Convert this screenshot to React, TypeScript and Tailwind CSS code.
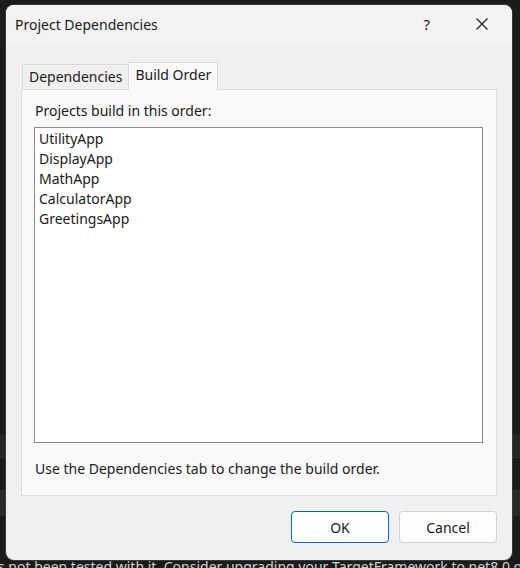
import React from "react";

const font = { fontFamily: '"Segoe UI", "Noto Sans", "Open Sans", sans-serif' };

export default function App() {
  const items = ["UtilityApp", "DisplayApp", "MathApp", "CalculatorApp", "GreetingsApp"];
  return (
    <div className="relative w-[520px] h-[568px] overflow-hidden bg-[#1b1b1b]" style={font}>
      {/* background IDE content */}
      <div className="absolute inset-0 flex flex-col">
        <div className="h-[416px] shrink-0" />
        <div className="h-[19px] shrink-0 bg-[#1b1b1b]" />
        <div className="h-[22px] shrink-0 bg-[#262626]" />
        <div className="h-[10px] shrink-0 bg-[#1b1b1b] border-t border-[#2e2e2e]" />
        <div className="h-[26px] shrink-0 mt-[23px] bg-[#2a2a2a] text-[#c8c8c8] text-[15px] leading-[26px] -ml-[8px]">
          S
        </div>
        <div className="mt-[42px] shrink-0 text-[#cfcfcf] text-[14px] leading-[18px] whitespace-nowrap -ml-[2px]">
          s not been tested with it. Consider upgrading your TargetFramework to net8.0 o
        </div>
      </div>

      {/* dialog window */}
      <div className="absolute left-[6px] top-[5px] w-[506px] h-[555px] rounded-[8px] bg-[#f0f0f0] overflow-hidden flex flex-col shadow-[0_0_0_1px_#3a3a3a]">
        <div className="h-[38px] bg-[#f3f3f3] flex items-center pl-[9px] pr-[24px] text-[14px] text-[#1a1a1a]">
          <span>Project Dependencies</span>
          <span className="ml-auto mr-[46px] text-[15px]">?</span>
          <svg width="12" height="12" viewBox="0 0 12 12">
            <path d="M0.5 0.5 L11.5 11.5 M11.5 0.5 L0.5 11.5" stroke="#1a1a1a" strokeWidth="1.1" />
          </svg>
        </div>

        <div className="flex flex-col px-[15px] pt-[18px]">
          <div className="flex items-end h-[28px] pl-[1px] text-[14px] text-[#1a1a1a]">
            <div className="h-[25px] px-[6px] border border-b-0 border-[#dadada] bg-[#f0f0f0] leading-[23px] -mr-[1px]">
              Dependencies
            </div>
            <div className="h-[28px] px-[6px] border border-b-0 border-[#dadada] bg-[#f9f9f9] leading-[24px] relative top-[1px] z-10">
              Build Order
            </div>
          </div>
          <div className="h-[407px] border border-[#dcdcdc] bg-[#f9f9f9] flex flex-col pl-[12px] pr-[13px] text-[14px] text-[#1a1a1a]">
            <div className="h-[37px] pt-[11px] pl-[1px] leading-[20px]">Projects build in this order:</div>
            <div className="h-[316px] border border-[#828790] bg-white pt-[1px] pl-[4px]">
              {items.map((it) => (
                <div key={it} className="leading-[20px] h-[20px]">
                  {it}
                </div>
              ))}
            </div>
            <div className="pl-[1px] pt-[16px] leading-[20px]">Use the Dependencies tab to change the build order.</div>
          </div>
        </div>

        <div className="flex justify-end gap-[10px] pt-[15px] pr-[15px] text-[14px] text-[#1a1a1a]">
          <button className="w-[98px] h-[32px] rounded-[4px] border border-[#0067c0] bg-white">OK</button>
          <button className="w-[98px] h-[32px] rounded-[4px] border border-[#d0d0d0] bg-[#fdfdfd]">Cancel</button>
        </div>
      </div>
    </div>
  );
}
